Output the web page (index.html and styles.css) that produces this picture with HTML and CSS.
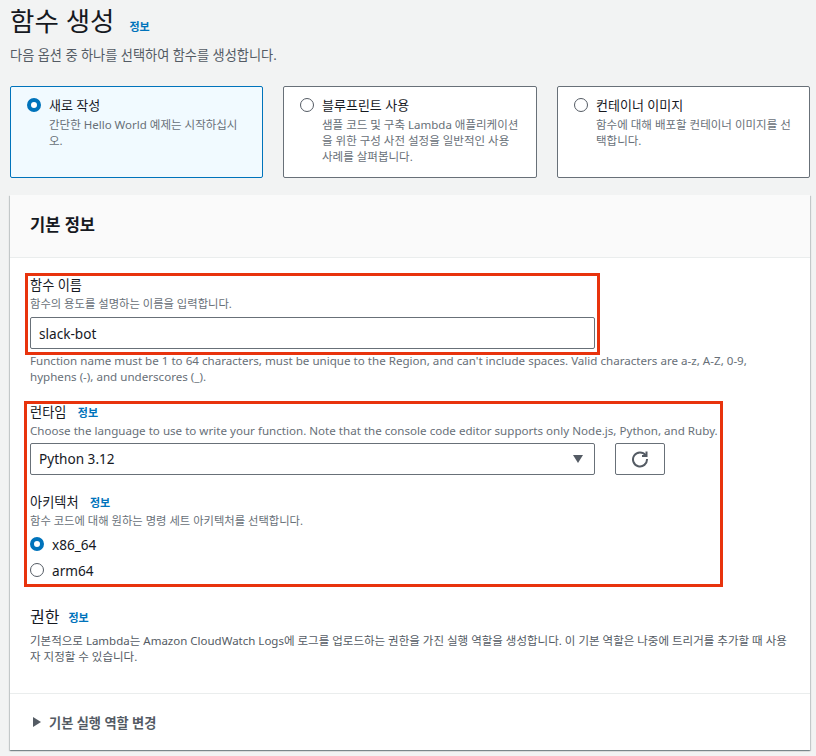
FILE: index.html
```html
<!DOCTYPE html>
<html lang="ko">
  <head>
    <meta charset="UTF-8" />
    <meta name="viewport" content="width=device-width, initial-scale=1.0" />
    <title>함수 생성</title>
    <link rel="stylesheet" href="styles.css">
  </head>
  <body>
    <div class="page">
      <div class="page-title">
        <h1>함수 생성</h1>
        <a class="info-link">정보</a>
      </div>
      <p class="page-desc">다음 옵션 중 하나를 선택하여 함수를 생성합니다.</p>

      <div class="tiles">
        <div class="tile selected">
          <span class="radio checked"></span>
          <div>
            <p class="tile-name">새로 작성</p>
            <p class="tile-desc">간단한 Hello World 예제는 시작하십시오.</p>
          </div>
        </div>
        <div class="tile">
          <span class="radio"></span>
          <div>
            <p class="tile-name">블루프린트 사용</p>
            <p class="tile-desc">샘플 코드 및 구축 Lambda 애플리케이션을 위한 구성 사전 설정을 일반적인 사용 사례를 살펴봅니다.</p>
          </div>
        </div>
        <div class="tile">
          <span class="radio"></span>
          <div>
            <p class="tile-name">컨테이너 이미지</p>
            <p class="tile-desc">함수에 대해 배포할 컨테이너 이미지를 선택합니다.</p>
          </div>
        </div>
      </div>

      <div class="panel">
        <div class="panel-header"><h2>기본 정보</h2></div>
        <div class="panel-body">
          <div class="mark mark-name">
            <p class="label">함수 이름</p>
            <p class="hint">함수의 용도를 설명하는 이름을 입력합니다.</p>
            <div class="input">slack-bot</div>
          </div>
          <p class="help">Function name must be 1 to 64 characters, must be unique to the Region, and can't include spaces. Valid characters are a-z, A-Z, 0-9, hyphens (-), and underscores (_).</p>

          <div class="mark mark-runtime">
            <p class="label">런타임 <a class="info-link">정보</a></p>
            <p class="hint hint-latin">Choose the language to use to write your function. Note that the console code editor supports only Node.js, Python, and Ruby.</p>
            <div class="select-row">
              <div class="input select">
                Python 3.12
                <span class="caret"></span>
              </div>
              <div class="refresh">
                <svg width="18" height="18" viewBox="0 0 18 18" fill="none" stroke="#545b64" stroke-width="2">
                  <path d="M14.6 5.2A7 7 0 1 0 16 9" />
                  <path d="M15.5 1.5V6H11" />
                </svg>
              </div>
            </div>
            <p class="label arch-label">아키텍처 <a class="info-link">정보</a></p>
            <p class="hint">함수 코드에 대해 원하는 명령 세트 아키텍처를 선택합니다.</p>
            <div class="arch-options">
              <div class="arch-option">
                <span class="radio checked"></span>
                x86_64
              </div>
              <div class="arch-option">
                <span class="radio"></span>
                arm64
              </div>
            </div>
          </div>

          <div class="perm">
            <div class="perm-title">
              <h3>권한</h3>
              <a class="info-link">정보</a>
            </div>
            <p class="perm-desc">기본적으로 Lambda는 Amazon CloudWatch Logs에 로그를 업로드하는 권한을 가진 실행 역할을 생성합니다. 이 기본 역할은 나중에 트리거를 추가할 때 사용자 지정할 수 있습니다.</p>
          </div>
        </div>
        <div class="panel-footer">
          <span class="arrow"></span>
          기본 실행 역할 변경
        </div>
      </div>
    </div>
  </body>
</html>
```

FILE: styles.css
```css
body {
  margin: 0;
  background-color: #f2f3f3;
  color: #16191f;
  font-family: "Noto Sans", "Noto Sans CJK KR", sans-serif;
}

p {
  margin: 0;
}

.page {
  height: 756px;
  padding: 0 6px 0 10px;
  overflow: hidden;
}

.page-title {
  display: flex;
  align-items: baseline;
  gap: 15px;
  height: 42px;
}

h1 {
  margin: 0;
  font-size: 26.5px;
  font-weight: 400;
  line-height: 42px;
}

.info-link {
  color: #0073bb;
  font-size: 11px;
  font-weight: 700;
}

.page-desc {
  margin-top: 4px;
  font-size: 13.2px;
  line-height: 18px;
  color: #545b64;
}

.tiles {
  display: grid;
  grid-template-columns: 253px 254px 253px;
  gap: 20px;
  margin-top: 22px;
}

.tile {
  display: flex;
  gap: 8px;
  height: 92px;
  box-sizing: border-box;
  padding: 10px 16px;
  background-color: #fff;
  border: 1px solid #687078;
  border-radius: 2px;
}

.tile.selected {
  background-color: #f1faff;
  border-color: #0073bb;
}

.tile-name {
  font-size: 13px;
  line-height: 16px;
}

.tile-desc {
  margin-top: 4px;
  font-size: 11.5px;
  line-height: 16px;
  color: #687078;
}

.radio {
  flex: none;
  width: 14px;
  height: 14px;
  box-sizing: border-box;
  margin-top: 1px;
  background-color: #fff;
  border: 1px solid #545b64;
  border-radius: 50%;
}

.radio.checked {
  border: 4px solid #0073bb;
}

.panel {
  width: 800px;
  height: 555px;
  margin-top: 17px;
  background-color: #fff;
  box-shadow: 0 1px 1px rgba(0, 28, 36, 0.3), 1px 1px 1px rgba(0, 28, 36, 0.15), -1px 1px 1px rgba(0, 28, 36, 0.15);
}

.panel-header {
  height: 63px;
  box-sizing: border-box;
  padding: 19px 20px;
  background-color: #fafafa;
  border-bottom: 1px solid #eaeded;
}

h2 {
  margin: 0;
  font-size: 16.5px;
  font-weight: 700;
  line-height: 22px;
}

.panel-body {
  height: 436px;
  box-sizing: border-box;
  padding: 15px 15px 0;
  border-bottom: 1px solid #eaeded;
}

.mark {
  box-sizing: border-box;
  border: 3px solid #e8330d;
}

.mark-name {
  width: 575px;
  height: 82px;
  padding: 1px 2px 0;
}

.mark-runtime {
  width: 699px;
  height: 186px;
  margin-left: -1px;
  padding: 0 3px;
}

.label {
  height: 16px;
  font-size: 13.2px;
  line-height: 16px;
}

.label .info-link {
  margin-left: 8px;
}

.hint {
  margin-top: 3px;
  font-size: 11.3px;
  line-height: 16px;
  color: #687078;
  white-space: nowrap;
}

.hint-latin {
  font-size: 11.6px;
}

.input {
  width: 565px;
  height: 32px;
  box-sizing: border-box;
  margin-top: 5px;
  padding: 0 8px;
  background-color: #fff;
  border: 1px solid #687078;
  border-radius: 2px;
  font-size: 13.6px;
  line-height: 32px;
}

.help {
  height: 48px;
  margin-top: -2px;
  padding: 0 5px;
  font-size: 11.6px;
  line-height: 16px;
  color: #687078;
}

.select-row {
  display: flex;
  gap: 20px;
  margin-top: -1px;
}

.select {
  display: flex;
  align-items: center;
  justify-content: space-between;
}

.caret {
  width: 0;
  height: 0;
  margin-right: 3px;
  border-left: 5px solid transparent;
  border-right: 5px solid transparent;
  border-top: 8px solid #545b64;
}

.refresh {
  display: flex;
  align-items: center;
  justify-content: center;
  width: 50px;
  height: 32px;
  box-sizing: border-box;
  margin-top: 5px;
  border: 1px solid #687078;
  border-radius: 2px;
}

.arch-label {
  margin-top: 19px;
}

.arch-options {
  margin-top: 2px;
}

.arch-option {
  display: flex;
  align-items: center;
  gap: 8px;
  height: 26px;
  font-size: 13.6px;
}

.arch-option .radio {
  margin-top: 0;
}

.perm {
  padding: 19px 5px 0;
}

.perm-title {
  display: flex;
  align-items: center;
  gap: 9px;
}

h3 {
  margin: 0;
  font-size: 16px;
  font-weight: 400;
  line-height: 22px;
}

.perm-desc {
  margin-top: 5px;
  font-size: 11.5px;
  line-height: 16px;
  color: #545b64;
}

.panel-footer {
  display: flex;
  align-items: center;
  gap: 8px;
  height: 56px;
  box-sizing: border-box;
  padding-left: 23px;
  font-size: 13.2px;
  font-weight: 700;
  color: #545b64;
}

.arrow {
  width: 0;
  height: 0;
  border-top: 5px solid transparent;
  border-bottom: 5px solid transparent;
  border-left: 8px solid #545b64;
}
```
